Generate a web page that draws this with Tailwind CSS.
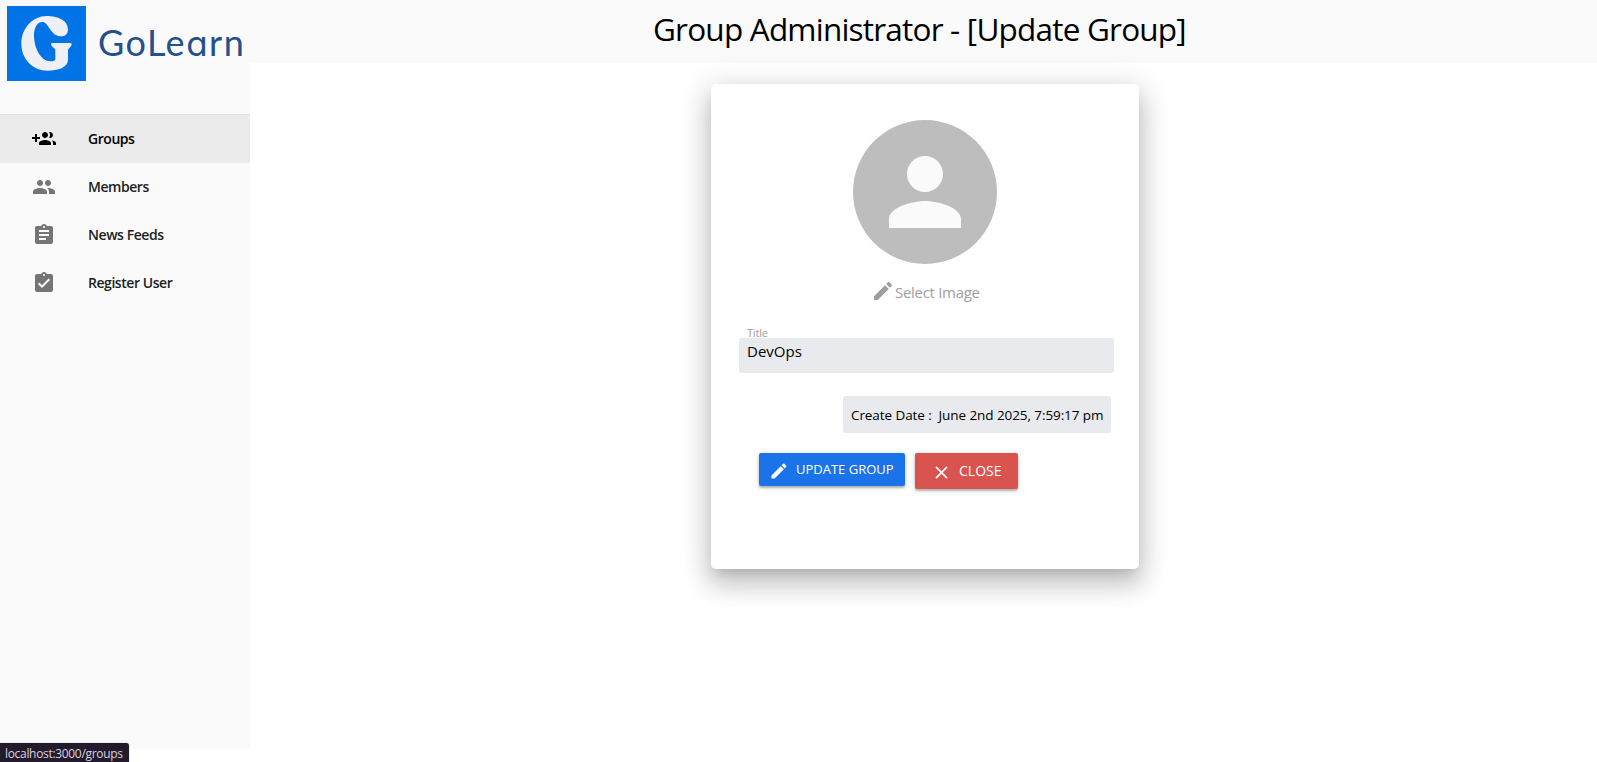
<!DOCTYPE html>
<html lang="en">
<head>
<meta charset="utf-8">
<title>GoLearn</title>
<script src="https://cdn.jsdelivr.net/npm/@tailwindcss/browser@4"></script>
</head>
<body class="relative flex h-[762px] overflow-hidden bg-white font-['Open_Sans','Noto_Sans',sans-serif] text-black">
<aside class="h-[749px] w-[250px] shrink-0 bg-[#fafafa]">
  <div class="flex h-[114px] items-start pt-[6px] pl-[7px]">
    <svg class="h-[75px] w-[79px] shrink-0" viewBox="21 18 237 225" preserveAspectRatio="none">
      <rect x="21" y="18" width="237" height="225" fill="#0073e6"/>
      <path fill="#eef0f6" d="M140 48C172 48 204 60 204 88C204 102 196 109 185 109C163 109 155 94 147 83C141 74 136 66 127 66C111 66 102 84 102 106C102 144 122 184 152 184C161 184 166 182 166 177V151C166 144 154 142 153 132Q153 129 158 129H210Q215 129 215 133C215 141 204 145 204 152V179C204 202 174 212 143 212C98 212 64 177 64 131C64 85 98 48 140 48Z"/>
    </svg>
    <div class="mt-[14px] ml-[12px] font-['Lato',sans-serif] text-[36px] leading-[44px] tracking-[1.5px] whitespace-nowrap text-[#25508a]">GoLe<span class="font-['Inter',sans-serif] text-[35px] font-normal [font-feature-settings:'cv11']">a</span>rn</div>
  </div>
  <nav class="border-t border-[#e0e0e0] text-[14px] font-semibold tracking-[-0.45px]">
    <a class="flex h-12 items-center bg-[#ebebeb] pl-8">
      <svg class="mr-8 size-6" viewBox="0 0 24 24"><path d="M8 10H5V7H3v3H0v2h3v3h2v-3h3v-2zm10 1c1.66 0 2.99-1.34 2.99-3S19.66 5 18 5c-.32 0-.63.05-.91.14.57.81.9 1.79.9 2.86s-.34 2.04-.9 2.86c.28.09.59.14.91.14zm-5 0c1.66 0 2.99-1.34 2.99-3S14.66 5 13 5c-1.66 0-3 1.34-3 3s1.34 3 3 3zm6.62 2.16c.83.73 1.38 1.66 1.38 2.84v2h3v-2c0-1.54-2.37-2.49-4.38-2.84zM13 13c-2 0-6 1-6 3v2h12v-2c0-2-4-3-6-3z"/></svg>
      <span class="pb-0.5">Groups</span>
    </a>
    <a class="flex h-12 items-center pl-8 text-[#212121]">
      <svg class="mr-8 size-6 fill-[#757575]" viewBox="0 0 24 24"><path d="M16 11c1.66 0 2.99-1.34 2.99-3S17.66 5 16 5c-1.66 0-3 1.34-3 3s1.34 3 3 3zm-8 0c1.66 0 2.99-1.34 2.99-3S9.66 5 8 5C6.34 5 5 6.34 5 8s1.34 3 3 3zm0 2c-2.33 0-7 1.17-7 3.5V19h14v-2.5c0-2.33-4.67-3.5-7-3.5zm8 0c-.29 0-.62.02-.97.05 1.16.84 1.97 1.97 1.97 3.45V19h6v-2.5c0-2.33-4.67-3.5-7-3.5z"/></svg>
      <span class="pb-0.5">Members</span>
    </a>
    <a class="flex h-12 items-center pl-8 text-[#212121]">
      <svg class="mr-8 size-6 fill-[#757575]" viewBox="0 0 24 24"><path d="M19 3h-4.180C14.400 1.840 13.300 1 12 1c-1.300 0-2.400.840-2.820 2H5c-1.100 0-2 .9-2 2v14c0 1.100.9 2 2 2h14c1.100 0 2-.9 2-2V5c0-1.100-.9-2-2-2zm-7 0c.550 0 1 .450 1 1s-.450 1-1 1-1-.450-1-1 .450-1 1-1zm2 14H7v-2h7v2zm3-4H7v-2h10v2zm0-4H7V7h10v2z"/></svg>
      <span class="pb-0.5">News Feeds</span>
    </a>
    <a class="flex h-12 items-center pl-8 text-[#212121]">
      <svg class="mr-8 size-6 fill-[#757575]" viewBox="0 0 24 24"><path d="M19 3h-4.180C14.400 1.840 13.300 1 12 1c-1.300 0-2.400.840-2.820 2H5c-1.100 0-2 .9-2 2v14c0 1.100.9 2 2 2h14c1.100 0 2-.9 2-2V5c0-1.100-.9-2-2-2zm-7 0c.550 0 1 .450 1 1s-.450 1-1 1-1-.450-1-1 .450-1 1-1zm-2 14l-4-4 1.410-1.410L10 14.170l6.590-6.590L18 9l-8 8z"/></svg>
      <span class="pb-0.5">Register User</span>
    </a>
  </nav>
</aside>
<main class="flex-1">
  <header class="h-[63px] bg-[#fafafa] pl-[403px] text-[31.500px] leading-[58px] tracking-[-0.79px] whitespace-nowrap">Group Administrator - [Update Group]</header>
  <section class="mt-[21px] ml-[461px] flex h-[485px] w-[428px] flex-col rounded-[5px] bg-white pt-9 pr-[25px] pl-7 shadow-[0_8px_10px_-5px_rgba(0,0,0,0.12),0_16px_24px_2px_rgba(0,0,0,0.14),0_6px_30px_5px_rgba(0,0,0,0.13)]">
    <div class="ml-[114px] flex size-36 items-center justify-center rounded-full bg-[#bdbdbd]">
      <svg class="size-[108px] fill-[#fafafa]" viewBox="0 0 24 24"><path d="M12 12c2.210 0 4-1.790 4-4s-1.790-4-4-4-4 1.790-4 4 1.790 4 4 4zm0 2c-2.670 0-8 1.340-8 4v2h16v-2c0-2.660-5.330-4-8-4z"/></svg>
    </div>
    <div class="mt-[15px] ml-[132px] flex h-6 text-[15px] leading-[26px] tracking-[-0.3px] whitespace-nowrap text-[#9e9e9e]">
      <svg class="size-6 shrink-0 fill-[#9e9e9e]" viewBox="0 0 24 24"><path d="M3 17.250V21h3.750L17.810 9.940l-3.750-3.750L3 17.250zM20.710 7.040c.390-.390.390-1.020 0-1.410l-2.340-2.340c-.390-.390-1.020-.390-1.410 0l-1.830 1.830 3.750 3.750 1.830-1.830z"/></svg>
      <span>Select Image</span>
    </div>
    <label class="mt-[24px] ml-2 h-[11px] text-[11px] leading-[12px] tracking-[-0.2px] text-[#9e9e9e]">Title</label>
    <div class="h-[35px] rounded-[3px] bg-[#e8eaed] pl-2 text-[15px] leading-[26px] tracking-[0px]">DevOps</div>
    <div class="mt-[23px] ml-[104px] flex h-[37px] w-[268px] items-center rounded-[3px] bg-[#e8eaed] pt-px pl-2 text-[13.500px] tracking-[-0.08px] whitespace-pre"><span>Create Date :  June 2nd 2025, 7:59:17 pm</span></div>
    <div class="mt-5 ml-5 flex items-start gap-[10px] whitespace-nowrap text-white">
      <button class="flex h-[33px] w-[146px] rounded-[2px] bg-[#1a73e8] pl-[10px] text-[13px] leading-[33px] shadow-[0_2px_2px_rgba(0,0,0,0.2),0_1px_5px_rgba(0,0,0,0.2)]">
        <svg class="mt-[8px] mr-[7px] size-5 shrink-0 fill-white" viewBox="0 0 24 24"><path d="M3 17.250V21h3.750L17.810 9.940l-3.750-3.750L3 17.250zM20.710 7.040c.390-.390.390-1.020 0-1.410l-2.340-2.340c-.390-.390-1.020-.390-1.410 0l-1.830 1.830 3.750 3.750 1.830-1.830z"/></svg>
        <span>UPDATE GROUP</span>
      </button>
      <button class="flex h-[36px] w-[103px] rounded-[2px] bg-[#d9534f] pl-4 text-[14px] leading-[36px] shadow-[0_2px_2px_rgba(0,0,0,0.2),0_1px_5px_rgba(0,0,0,0.2)]">
        <svg class="mt-[9px] mr-[7px] size-[21px] shrink-0 fill-white" viewBox="0 0 24 24"><path d="M19 6.410L17.590 5 12 10.590 6.410 5 5 6.410 10.590 12 5 17.590 6.410 19 12 13.410 17.590 19 19 17.590 13.410 12z"/></svg>
        <span>CLOSE</span>
      </button>
    </div>
  </section>
</main>
<div class="absolute bottom-0 left-0 h-[19px] w-[129px] rounded-tr-[3px] bg-[#231a2e] pl-[5px] text-[12px] leading-[21px] tracking-[-0.32px] whitespace-nowrap text-[#d8d4dd] shadow-[0_0_1px_#777]">localhost:3000/groups</div>
</body>
</html>
